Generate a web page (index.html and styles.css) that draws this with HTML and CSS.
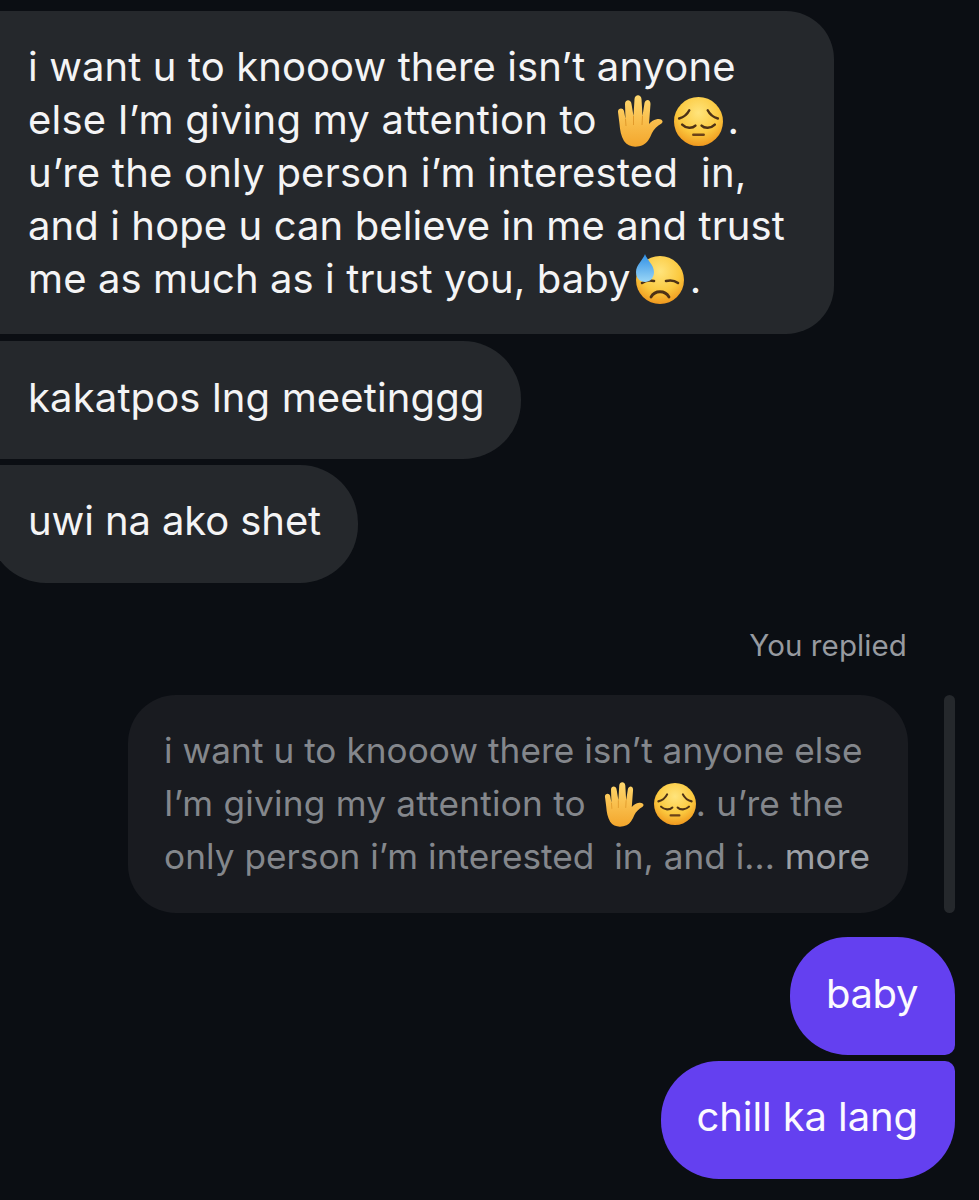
FILE: index.html
```html
<!DOCTYPE html>
<html lang="en">
<head>
<meta charset="utf-8">
<title>Chat</title>
<link rel="stylesheet" href="styles.css">
</head>
<body>
<svg class="defs" width="0" height="0" aria-hidden="true">
  <defs>
    <radialGradient id="faceFill" cx="50%" cy="32%" r="70%">
      <stop offset="0%" stop-color="#ffe47c"/>
      <stop offset="60%" stop-color="#fbc93f"/>
      <stop offset="100%" stop-color="#ef951c"/>
    </radialGradient>
    <linearGradient id="handFill" x1="0" y1="0" x2="0" y2="1">
      <stop offset="0%" stop-color="#ffd86e"/>
      <stop offset="100%" stop-color="#f3a62c"/>
    </linearGradient>
    <linearGradient id="dropFill" x1="0" y1="0" x2="0" y2="1">
      <stop offset="0%" stop-color="#2f8fe6"/>
      <stop offset="100%" stop-color="#9ad6f6"/>
    </linearGradient>
    <symbol id="hand" viewBox="0 0 46 52">
      <path fill="url(#handFill)" d="M7 46C4 41 3 35 2.500 29L1 17C.6 13 6 12 7 16L8.500 24 8 9C8 4 14 4 14.500 9L16.500 21 17.500 4C18-1 24-1 24.500 4L25.500 21 27.500 8C28.500 4 33.500 4 33.500 9L32 29C34 26.500 37 24.500 40.500 24 45 23.500 47 26.500 44.500 28.500 40 31 37 34 35 38 33 43 30 48 26 50 19 53 11 52 7 46Z"/>
      <path d="M8.500 24 9 31M16.500 21V30M25.500 21 25 30" fill="none" stroke="#e19a2b" stroke-width="1"/>
    </symbol>
    <symbol id="pensive" viewBox="0 0 48 48">
      <circle cx="24" cy="24" r="24" fill="url(#faceFill)"/>
      <path d="M5 21C9 20 13 17 15 13M43 21C39 20 35 17 33 13" fill="none" stroke="#4e3216" stroke-width="2.400" stroke-linecap="round"/>
      <path d="M8 27C12 31 18 31 21 28M27 28C30 31 36 31 40 27" fill="none" stroke="#4e3216" stroke-width="2.400" stroke-linecap="round"/>
      <path d="M19 37H29" fill="none" stroke="#6b4218" stroke-width="2.600" stroke-linecap="round"/>
    </symbol>
    <symbol id="sweat" viewBox="0 0 50 50">
      <circle cx="25" cy="26" r="24" fill="url(#faceFill)"/>
      <path d="M7 29C11 26 15 26 19 27M31 27C35 26 39 26 43 29" fill="none" stroke="#4e3216" stroke-width="2.600" stroke-linecap="round"/>
      <path d="M16 43C20 36 30 36 34 43" fill="none" stroke="#4e3216" stroke-width="2.800" stroke-linecap="round"/>
      <path fill="url(#dropFill)" d="M10 0C12 6 19 11 19 18 19 24 15 28 10 28 5 28 1 24 1 18 1 11 8 6 10 0Z"/>
    </symbol>
  </defs>
</svg>

<main class="thread">
  <div class="bubble incoming tall">i want u to knooow there isn’t anyone<br><span class="loose">else I’m giving my attention to</span> <svg class="emoji hand"><use href="#hand"/></svg> <svg class="emoji face"><use href="#pensive"/></svg>.<br><span class="loose">u’re the only person i’m interested&nbsp; in,</span><br>and i hope u can believe in me and trust<br>me as much as i trust you, baby<svg class="emoji sweat"><use href="#sweat"/></svg>.</div>
  <div class="bubble incoming mid">kakatpos lng meetinggg</div>
  <div class="bubble incoming last">uwi na ako shet</div>

  <div class="reply">
    <div class="reply-label">You replied</div>
    <div class="reply-row">
      <div class="quote">i want u to knooow there isn’t anyone else<br><span class="loose">I’m giving my attention to</span> <svg class="emoji hand small"><use href="#hand"/></svg> <svg class="emoji face small"><use href="#pensive"/></svg><span class="loose">. u’re the</span><br>only person i’m interested&nbsp; in, and i... <span class="more">more</span></div>
      <div class="quote-bar"></div>
    </div>
  </div>

  <div class="bubble outgoing first">baby</div>
  <div class="bubble outgoing second">chill ka lang</div>
</main>
</body>
</html>
```

FILE: styles.css
```css
html, body {
  margin: 0;
  height: 1200px;
  overflow: hidden;
  background: #0b0e13;
}

body {
  font-family: Inter, "Liberation Sans", sans-serif;
  color: #f4f4f5;
}

.defs {
  position: absolute;
}

.thread {
  display: flex;
  flex-direction: column;
  align-items: flex-start;
  padding-top: 11px;
}

.bubble {
  font-size: 40px;
  letter-spacing: 0.1px;
  line-height: 53px;
  white-space: nowrap;
  box-sizing: border-box;
}

.loose {
  letter-spacing: 0.22px;
}

.incoming {
  background: #25282c;
  margin-left: -12px;
  padding: 30px 36px 35px 40px;
  border-radius: 10px 58px 58px 10px;
  margin-bottom: 6px;
}

.tall {
  padding: 29px 49px 29px 40px;
  border-radius: 10px 48px 48px 10px;
  margin-bottom: 7px;
}

.mid {
  letter-spacing: 0.14px;
}

.last {
  letter-spacing: -0.1px;
  padding: 29px 37px 36px 40px;
  border-radius: 10px 58px 58px 58px;
  margin-bottom: 0;
}

.emoji {
  display: inline-block;
  vertical-align: middle;
}

.hand {
  width: 46px;
  height: 52px;
  margin: -14px 0 -10px 9px;
}

.face {
  width: 49px;
  height: 49px;
  margin: -12px 4px -8px 0;
}

.sweat {
  width: 50px;
  height: 50px;
  margin: -14px 5px -8px 4px;
}

.small.hand {
  width: 40px;
  height: 45px;
  margin-left: 8px;
}

.small.face {
  width: 42px;
  height: 42px;
  margin-left: 0;
  margin-right: 0;
}

.reply {
  align-self: stretch;
  margin-top: 45px;
}

.reply-label {
  font-size: 29.500px;
  letter-spacing: 0.1px;
  line-height: 34px;
  color: #979aa0;
  text-align: right;
  padding-right: 72px;
  margin-bottom: 33px;
}

.reply-row {
  display: flex;
  justify-content: flex-end;
  gap: 36px;
  padding-right: 24px;
}

.quote {
  box-sizing: border-box;
  width: 780px;
  height: 218px;
  padding: 29px 0 0 36px;
  background: #191b20;
  border-radius: 48px;
  font-size: 35.200px;
  letter-spacing: 0.03px;
  line-height: 53px;
  color: #84878c;
  white-space: nowrap;
}

.more {
  color: #9da0a5;
}

.quote-bar {
  width: 11px;
  height: 218px;
  background: #25282c;
  border-radius: 6px;
}

.outgoing {
  align-self: flex-end;
  margin-right: 24px;
  background: #6440f0;
  color: #fbfaff;
}

.first {
  letter-spacing: -0.4px;
  padding: 30px 37px 35px 36px;
  margin-top: 24px;
  margin-bottom: 6px;
  border-radius: 58px 58px 10px 58px;
}

.second {
  letter-spacing: -0.1px;
  padding: 29px 37px 36px 36px;
  border-radius: 58px 10px 58px 58px;
}
```
